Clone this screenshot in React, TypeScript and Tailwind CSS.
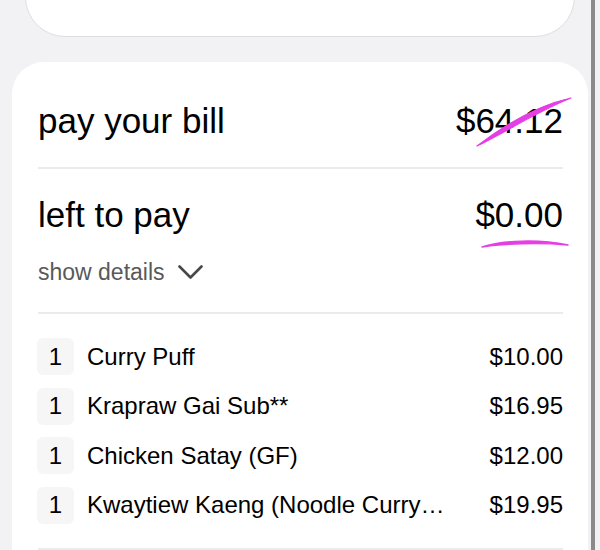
import React from "react";

const items = [
  { qty: 1, name: "Curry Puff", price: "$10.00" },
  { qty: 1, name: "Krapraw Gai Sub**", price: "$16.95" },
  { qty: 1, name: "Chicken Satay (GF)", price: "$12.00" },
  { qty: 1, name: "Kwaytiew Kaeng (Noodle Curry Soup)", price: "$19.95" },
];

function Divider() {
  return <div className="h-[2px] bg-[#ebebef]" />;
}

export default function App() {
  return (
    <div
      className="relative h-[550px] overflow-hidden bg-[#f2f2f5] text-black"
      style={{ fontFamily: '"Liberation Sans", Arial, sans-serif' }}
    >
      {/* card above, mostly scrolled out */}
      <div className="mx-[25px] -mt-[63px] h-[100px] rounded-[40px] border border-[#dedee2] bg-white" />

      {/* bill card */}
      <div className="mx-[12px] mt-[25px] rounded-t-[32px] bg-white pl-[26px] pr-[25px] pt-[39px]">
        <div className="flex items-center justify-between text-[35px] leading-[40px]">
          <span>pay your bill</span>
          <span className="relative">
            $64.12
            <svg
              className="absolute left-[18px] top-[-6px]"
              width="100"
              height="54"
              viewBox="0 0 100 54"
            >
              <path
                d="M3 51 C 28 32, 60 11, 97 3 C 62 17, 32 37, 3 51 Z"
                fill="#e53ee4"
                stroke="#e53ee4"
                strokeWidth="1.2"
                strokeLinejoin="round"
              />
            </svg>
          </span>
        </div>

        <div className="mt-[26px]">
          <Divider />
        </div>

        <div className="mt-[26px] flex items-center justify-between text-[35px] leading-[40px]">
          <span>left to pay</span>
          <span className="relative">
            $0.00
            <svg
              className="absolute left-[4px] top-[42px]"
              width="92"
              height="12"
              viewBox="0 0 92 12"
            >
              <path
                d="M3 10 C 25 3, 60 2, 89 8 C 60 5.5, 25 6.5, 3 10 Z"
                fill="#e53ee4"
                stroke="#e53ee4"
                strokeWidth="1.4"
                strokeLinejoin="round"
              />
            </svg>
          </span>
        </div>

        <div className="mt-[23px] flex items-center gap-[13px] text-[23px] leading-[28px] text-[#595959]">
          <span>show details</span>
          <svg width="26" height="15" viewBox="0 0 26 15" fill="none">
            <polyline
              points="1.5,1.5 12.5,12.5 23.5,1.5"
              stroke="#474747"
              strokeWidth="2.6"
              strokeLinecap="round"
              strokeLinejoin="round"
            />
          </svg>
        </div>

        <div className="mt-[26px]">
          <Divider />
        </div>

        <div className="mt-[24px] flex flex-col gap-[12.5px]">
          {items.map((item) => (
            <div key={item.name} className="flex items-center text-[24px]">
              <div className="-ml-px flex h-[37px] w-[37px] shrink-0 items-center justify-center rounded-[6px] bg-[#f6f6f7]">
                {item.qty}
              </div>
              <span className="ml-[13px] min-w-0 flex-1 truncate">{item.name}</span>
              <span className="ml-[42px] shrink-0">{item.price}</span>
            </div>
          ))}
        </div>

        <div className="mt-[24px]">
          <Divider />
        </div>
        <div className="h-[40px]" />
      </div>

      {/* scroll thumb */}
      <div className="absolute bottom-0 right-[5px] top-0 w-[4px] bg-[#8a8a8a]" />
    </div>
  );
}
